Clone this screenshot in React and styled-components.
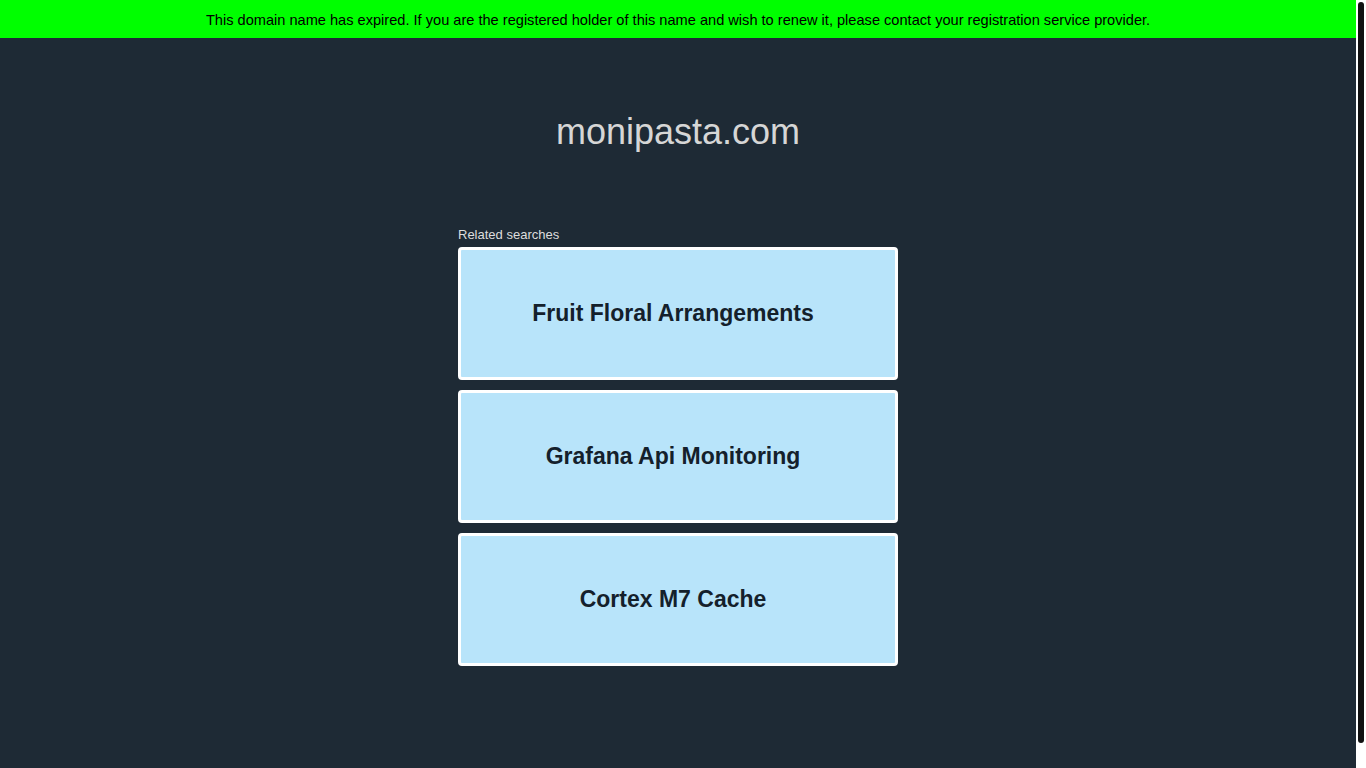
import React from 'react';
import styled, { createGlobalStyle } from 'styled-components';

const GlobalStyle = createGlobalStyle`
  html, body {
    margin: 0;
    padding: 0;
    height: 100%;
    overflow: hidden;
    background-color: #1e2a35;
    font-family: "Liberation Sans", Arial, sans-serif;
  }
`;

const Shell = styled.div`
  height: 100vh;
  display: flex;
`;

const Page = styled.div`
  flex: 1;
  overflow: hidden;
  display: flex;
  flex-direction: column;
  align-items: center;
  background-color: #1e2a35;
`;

const ScrollTrack = styled.div`
  width: 10px;
  flex-shrink: 0;
  background: #ffffff;
  padding: 2px;
  box-sizing: border-box;
`;

const ScrollThumb = styled.div`
  height: 741px;
  background: #111111;
  border-radius: 3px;
`;

const Banner = styled.div`
  width: 100%;
  height: 38px;
  padding-top: 1px;
  box-sizing: border-box;
  background-color: #00ff00;
  color: #000;
  font-size: 14.6px;
  display: flex;
  align-items: center;
  justify-content: center;
`;

const Domain = styled.h1`
  margin: 71px 0 0;
  font-size: 36px;
  font-weight: normal;
  line-height: 46px;
  color: #d6d6d6;
`;

const Searches = styled.div`
  width: 440px;
  margin-top: 73px;
  display: flex;
  flex-direction: column;
  gap: 10px;
`;

const Label = styled.div`
  font-size: 13px;
  color: #dddddd;
  line-height: 14px;
  margin-bottom: -5px;
`;

const Card = styled.a`
  box-sizing: border-box;
  height: 133px;
  display: flex;
  align-items: center;
  justify-content: center;
  padding-right: 10px;
  background-color: #b8e4fa;
  border: 3px solid #ffffff;
  border-radius: 4px;
  color: #14202b;
  font-size: 23px;
  font-weight: bold;
  text-decoration: none;
`;

const searches = ['Fruit Floral Arrangements', 'Grafana Api Monitoring', 'Cortex M7 Cache'];

export default function App() {
  return (
    <>
      <GlobalStyle />
      <Shell>
        <Page>
          <Banner>
            This domain name has expired. If you are the registered holder of this name and wish to renew it, please contact your registration service provider.
          </Banner>
          <Domain>monipasta.com</Domain>
          <Searches>
            <Label>Related searches</Label>
            {searches.map((s) => (
              <Card key={s} href="#">{s}</Card>
            ))}
          </Searches>
        </Page>
        <ScrollTrack>
          <ScrollThumb />
        </ScrollTrack>
      </Shell>
    </>
  );
}
